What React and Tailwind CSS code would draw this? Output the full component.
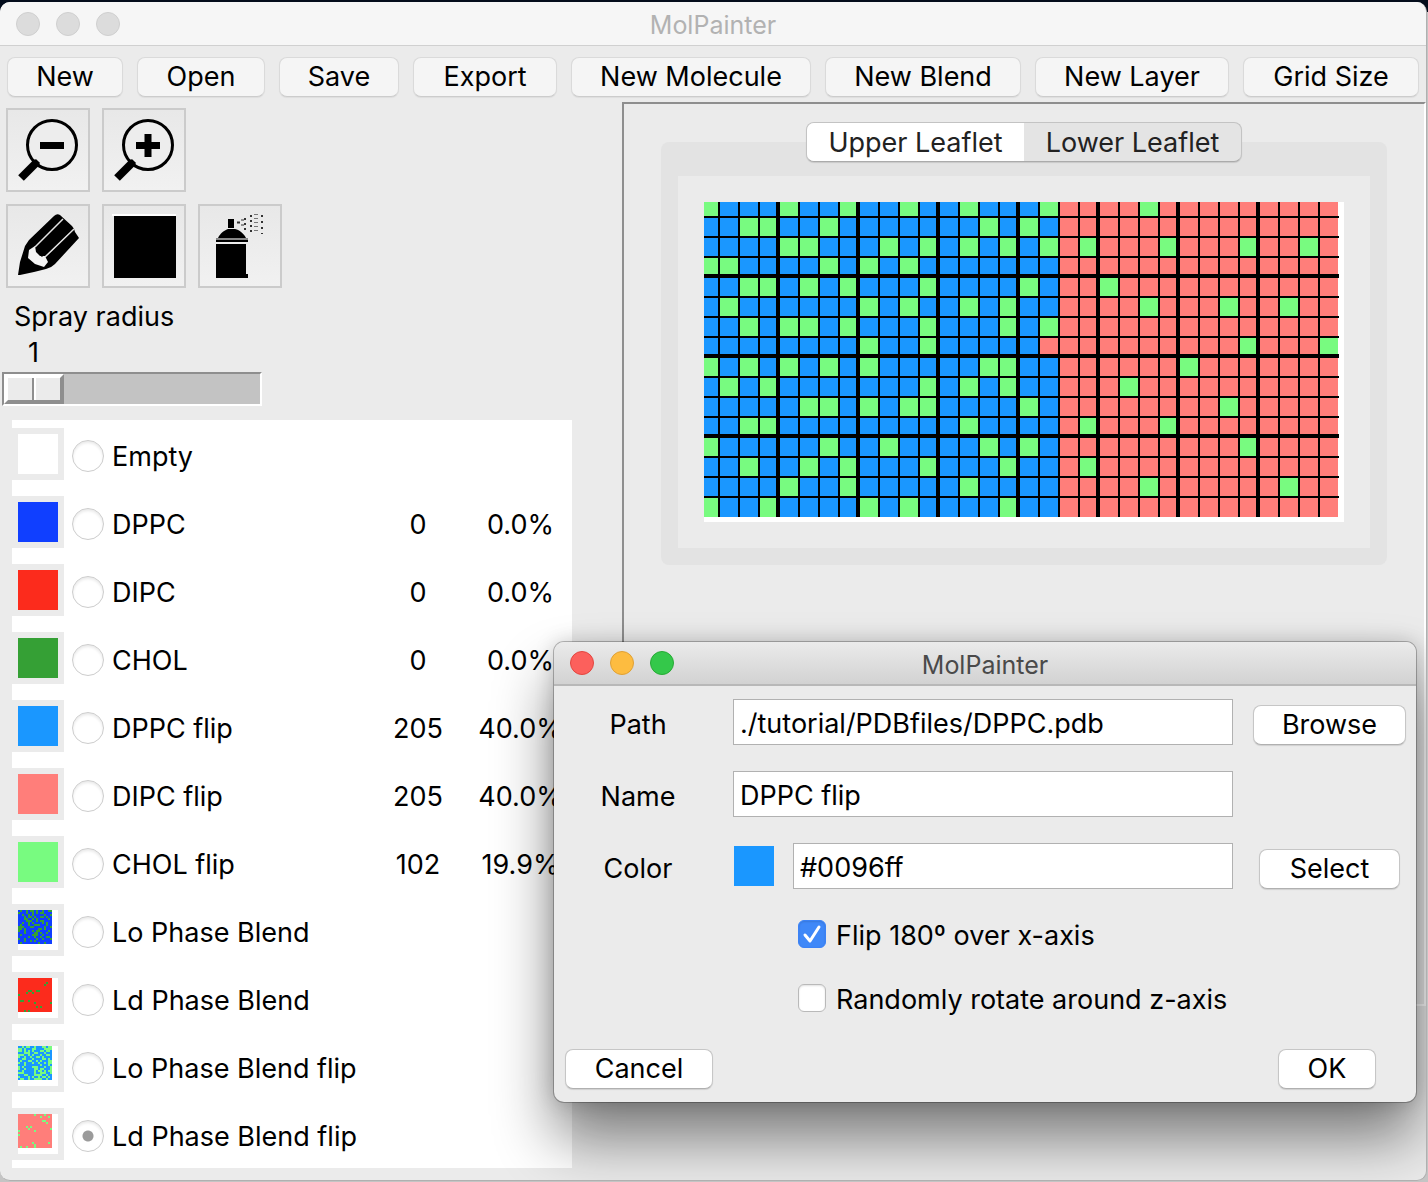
import { useState } from "react";

const BLUE = "#1a97ff";
const GREEN = "#78fb80";
const PINK = "#ff7e7a";

/* Columns that hold a CHOL flip molecule, one list for each row of the lattice. */
const CHOL_COLUMNS = [
  [0, 4, 7, 10, 13, 17, 22],
  [2, 3, 6, 14, 16],
  [4, 5, 9, 11, 13, 15, 17, 19, 23, 27, 30],
  [0, 1, 6, 8, 10],
  [2, 3, 5, 7, 11, 16, 20],
  [1, 8, 10, 13, 15, 22, 26, 29],
  [2, 4, 5, 7, 11, 15, 17],
  [8, 11, 27, 31],
  [0, 2, 4, 6, 8, 14, 15, 24],
  [1, 3, 11, 13, 15, 21],
  [5, 6, 8, 10, 11, 16, 26],
  [2, 3, 13, 19, 23],
  [0, 6, 9, 14, 16, 27],
  [2, 5, 7, 11, 15, 19],
  [4, 7, 13, 22, 29],
  [0, 3, 8, 10, 15],
];

function Lattice() {
  const cells = [];
  CHOL_COLUMNS.forEach((greens, r) => {
    for (let c = 0; c < 32; c++) {
      const base = c < 17 || (c === 17 && r !== 7) ? BLUE : PINK;
      cells.push(
        <rect key={`${r}-${c}`} x={c * 20} y={r * 20} width="20" height="20" fill={greens.includes(c) ? GREEN : base} />
      );
    }
  });
  const lines = [];
  for (let i = 1; i < 32; i++) {
    const w = i % 4 === 0 ? 4 : 2;
    lines.push(<rect key={`v${i}`} x={i * 20 - w} y="0" width={w} height="319" />);
  }
  for (let i = 1; i < 16; i++) {
    const w = i % 4 === 0 ? 4 : 2;
    lines.push(<rect key={`h${i}`} x="0" y={i * 20 - w} width="639" height={w} />);
  }
  return (
    <svg width="640" height="320" viewBox="4 4 640 320" shapeRendering="crispEdges" className="block bg-white">
      <svg x="0" y="0" width="638" height="319">{cells}</svg>
      {lines}
    </svg>
  );
}

const LO = [
  ".#..#.##.#..#..##", "#...#..#.#.##....", "..#..#.#.....#..#", "...#.##.#..##.#..",
  "...##..#.#.....#.", "....###..#.##....", "..#..#.#....#.#..", ".#...#..###...#..",
  "###...##.....#..#", "##.#......##.#...", "#..#...#.##....#.", "...#....##.#..#..",
  ".#.....###..#....", ".....#..#..#..##.", "#..#.....#..#...#", "...#..#.#........", ".#........#..#...",
];
const LD = [
  ".................", ".................", "..............#..", ".............#...",
  ".................", ".................", ".....##..##......", "....#..#.........",
  "#................", ".................", ".................", ".##..#...........",
  "........#.......#", ".................", ".........#.#.....", ".................", "...#.#...........",
];
const LO_FLIP = [
  "..#.##..#...##.##", "##.#...##....####", "##.#.#.#...##.##.", "...###..##...#...",
  "###..#.#...#..##.", "#..#..#..##.#....", "..##...#....##.#.", ".#...##..#.#...##",
  "#..#...#..#..#.##", "...#.......#...#.", "#.#....###...#..#", "#..#....##.##...#",
  "..#.....#.##.#.##", "###.....#..###..#", "...##...####..#..", "#....#.#..#.##.#.", ".##..#..####..#..",
];
const LD_FLIP = [
  "........#....#...", "...........#...#.", ".................", "............##...",
  "..............#..", ".................", "....#.#..........", ".....#..........#",
  "#.......#........", ".................", "#................", ".................",
  ".................", ".................", ".......#.......#.", "........#........", ".#..#...#........",
];

function Speckle({ rows, base, dot }) {
  return (
    <svg width="40" height="40" viewBox="0 0 40 40" shapeRendering="crispEdges" className="block bg-white">
      <rect width="34" height="34" fill={base} />
      {rows.flatMap((row, y) =>
        [...row].map((ch, x) =>
          ch === "#" ? <rect key={`${x}-${y}`} x={x * 2} y={y * 2} width="2" height="2" fill={dot} /> : null
        )
      )}
    </svg>
  );
}

const MOLECULES = [
  { name: "Empty", color: "bg-white" },
  { name: "DPPC", color: "bg-[#103fff]", count: "0", share: "0.0%" },
  { name: "DIPC", color: "bg-[#fc2b1c]", count: "0", share: "0.0%" },
  { name: "CHOL", color: "bg-[#35a035]", count: "0", share: "0.0%" },
  { name: "DPPC flip", color: "bg-[#1a97ff]", count: "205", share: "40.0%" },
  { name: "DIPC flip", color: "bg-[#ff7e7a]", count: "205", share: "40.0%" },
  { name: "CHOL flip", color: "bg-[#78fb80]", count: "102", share: "19.9%" },
  { name: "Lo Phase Blend", art: <Speckle rows={LO} base="#103fff" dot="#35a035" /> },
  { name: "Ld Phase Blend", art: <Speckle rows={LD} base="#fc2b1c" dot="#35a035" /> },
  { name: "Lo Phase Blend flip", art: <Speckle rows={LO_FLIP} base={BLUE} dot={GREEN} /> },
  { name: "Ld Phase Blend flip", art: <Speckle rows={LD_FLIP} base={PINK} dot={GREEN} /> },
];

function Magnifier({ plus }) {
  return (
    <svg viewBox="0 0 84 84" className="size-[84px]">
      <circle cx="46" cy="37" r="24.500" fill="#ededed" stroke="#000" strokeWidth="3" />
      <path d="M32 53 29 56" stroke="#000" strokeWidth="6" />
      <path d="M31 54 15 70" stroke="#000" strokeWidth="8" />
      <path d="M34 37.500H58" stroke="#000" strokeWidth="7" />
      {plus && <path d="M46 26V49" stroke="#000" strokeWidth="7" />}
    </svg>
  );
}

function Pencil() {
  return (
    <svg viewBox="0 0 84 84" className="size-[84px]">
      <path d="M12 71 14 58 19 42 23 36 48 12Q51 9 54 11L66 22Q68 24 69 28L73 34 49 60Q45 64 40 65L28 68 14 71Z" fill="#000" />
      <path d="M23 46 29 42 30 48 34 52 39 52 42 58 38 63 29 60 22 54Z" fill="#f4f4f4" />
      <path d="M29 43 57 15M39 53 68 25" stroke="#e4e4e4" strokeWidth="1.500" />
      <path d="M33 48 37 52" stroke="#000" strokeWidth="3" />
    </svg>
  );
}

function FillSquare() {
  return (
    <svg viewBox="0 0 84 84" className="size-[84px]" shapeRendering="crispEdges">
      <rect x="10" y="10" width="64" height="2" fill="#fff" />
      <rect x="12" y="12" width="62" height="62" />
    </svg>
  );
}

function SprayCan() {
  return (
    <svg viewBox="0 0 84 84" className="size-[84px]">
      <rect x="30" y="15" width="6" height="9" />
      <path d="M20 34C22 29 27 26 30 25H37C42 26 46 30 48 34Z" />
      <rect x="18" y="34" width="32" height="2" fill="#888" />
      <rect x="18" y="36" width="32" height="2" />
      <path d="M18 40H48V70H50V74H18Z" />
      <g fill="none" stroke="#333" strokeWidth="2">
        <path d="M39 18.500H42" />
        <path d="M47 14V26" strokeDasharray="2 3" />
        <path d="M53 11V28" strokeDasharray="2 3" />
        <path d="M58 10V30" strokeWidth="4" strokeDasharray="1 3" stroke="#777" />
        <path d="M64 11V30" strokeDasharray="2 4" />
        <path d="M43 16H46M43 21H46" strokeWidth="1" />
      </g>
    </svg>
  );
}

function ToolButton({ label, children }) {
  return (
    <button
      aria-label={label}
      className="flex size-[84px] items-center justify-center overflow-hidden border-2 border-[#cbcbcb] bg-linear-to-b from-[#e8e8e8] to-[#f1f1f1]"
    >
      <span className="-m-0.5 shrink-0">{children}</span>
    </button>
  );
}

function DialogButton({ className, children }) {
  return (
    <button
      className={`h-10 rounded-lg border border-[#c6c6c6] border-b-[#b0b0b0] bg-white shadow-[0_1px_1px_rgba(0,0,0,0.12)] ${className}`}
    >
      {children}
    </button>
  );
}

const FIELD = "h-[46px] border border-[#b1b1b1] bg-white px-1.5 pt-0.5 outline-none";

function CheckRow({ label, checked, onChange }) {
  return (
    <label className="flex h-8 items-center gap-2.5">
      <span className="relative mb-1 size-7">
        <input
          type="checkbox"
          checked={checked}
          onChange={onChange}
          className="block size-7 appearance-none rounded-md border border-[#b9b9b9] bg-white shadow-[inset_0_1px_2px_rgba(0,0,0,0.12)] checked:border-[#3b82f6] checked:bg-[#3f88f8]"
        />
        {checked && (
          <svg viewBox="0 0 28 28" className="pointer-events-none absolute inset-0 size-7">
            <path d="M7 15 12 21 21 7" fill="none" stroke="#fff" strokeWidth="3" strokeLinecap="round" strokeLinejoin="round" />
          </svg>
        )}
      </span>
      {label}
    </label>
  );
}

function Dialog() {
  const [path, setPath] = useState("./tutorial/PDBfiles/DPPC.pdb");
  const [name, setName] = useState("DPPC flip");
  const [color, setColor] = useState("#0096ff");
  const [flip, setFlip] = useState(true);
  const [rotate, setRotate] = useState(false);
  return (
    <section
      role="dialog"
      aria-label="MolPainter"
      className="absolute top-[640px] right-2.5 w-[862px] overflow-hidden rounded-[10px] bg-[#ebebeb] shadow-[0_0_0_1px_rgba(0,0,0,0.25),0_36px_60px_rgba(0,0,0,0.48),0_0_20px_rgba(0,0,0,0.18)]"
    >
      <header className="grid h-11 grid-cols-[1fr_auto_1fr] items-center border-b-2 border-[#b8b8b8] bg-linear-to-b from-[#ebebeb] to-[#d2d2d2] px-4">
        <div className="flex gap-4">
          <button aria-label="Close" className="size-6 rounded-full border border-[#e2463f] bg-[#fc605c]" />
          <button aria-label="Minimize" className="size-6 rounded-full border border-[#dfa035] bg-[#fdbc40]" />
          <button aria-label="Zoom" className="size-6 rounded-full border border-[#27aa35] bg-[#34c84a]" />
        </div>
        <h2 className="pt-1 text-[25px] leading-8 text-[#4a4a4a]">MolPainter</h2>
      </header>
      <div className="grid grid-cols-[168px_1fr_172px] items-center gap-y-[26px] pt-[13px]">
        <label htmlFor="path" className="pt-1.5 text-center">Path</label>
        <input id="path" value={path} onChange={(e) => setPath(e.target.value)} className={`mx-[11px] ${FIELD}`} />
        <DialogButton className="mt-1.5 mr-2.5 ml-[9px] justify-self-stretch">Browse</DialogButton>

        <label htmlFor="name" className="pt-1.5 text-center">Name</label>
        <input id="name" value={name} onChange={(e) => setName(e.target.value)} className={`mx-[11px] ${FIELD}`} />
        <span />

        <label htmlFor="color" className="pt-1.5 text-center">Color</label>
        <div className="mx-[11px] flex items-center">
          <span className="mr-[19px] ml-px size-10 shrink-0 bg-[#1a97ff]" />
          <input id="color" value={color} onChange={(e) => setColor(e.target.value)} className={`min-w-0 flex-1 ${FIELD}`} />
        </div>
        <DialogButton className="mt-1.5 mr-4 ml-[15px] justify-self-stretch">Select</DialogButton>
      </div>
      <div className="flex flex-col gap-8 pt-[31px] pl-[244px]">
        <CheckRow label="Flip 180º over x-axis" checked={flip} onChange={() => setFlip(!flip)} />
        <CheckRow label="Randomly rotate around z-axis" checked={rotate} onChange={() => setRotate(!rotate)} />
      </div>
      <footer className="flex justify-between pt-[33px] pr-10 pb-[13px] pl-[11px]">
        <DialogButton className="w-[148px]">Cancel</DialogButton>
        <DialogButton className="w-[98px]">OK</DialogButton>
      </footer>
    </section>
  );
}

function MoleculeTable() {
  const [selected, setSelected] = useState("Ld Phase Blend flip");
  return (
    <table className="ml-3 w-[560px] table-fixed border-collapse bg-white">
      <colgroup>
        <col className="w-[355px]" />
        <col className="w-[102px]" />
        <col />
      </colgroup>
      <tbody>
        {MOLECULES.map((m) => (
          <tr key={m.name} className="h-[68px]">
            <td className="p-0">
              <label className="flex items-center gap-2">
                <span className="size-[52px] bg-[#ebebeb] p-1.5">
                  {m.art || <span className={`block size-10 ${m.color}`} />}
                </span>
                <input
                  type="radio"
                  name="molecule"
                  checked={selected === m.name}
                  onChange={() => setSelected(m.name)}
                  className="mt-1 size-8 appearance-none rounded-full border border-[#cdcdcd] bg-white shadow-[inset_0_2px_3px_rgba(0,0,0,0.09)] checked:bg-[radial-gradient(circle,#9b9b9b_5px,white_6px)]"
                />
                <span className="pt-1.5 whitespace-nowrap">{m.name}</span>
              </label>
            </td>
            <td className="p-0 pt-1.5 text-center">{m.count}</td>
            <td className="p-0 pt-1.5 text-center">{m.share}</td>
          </tr>
        ))}
      </tbody>
    </table>
  );
}

export default function App() {
  const [radius, setRadius] = useState(1);
  const [leaflet, setLeaflet] = useState("Upper Leaflet");
  return (
    <div className="min-h-screen overflow-hidden bg-[#c4c4c4] font-['Inter','Liberation_Sans',sans-serif] text-[27px] leading-8 text-black">
      <div className="bg-linear-to-b from-[#040d1c] from-[12px] to-[#c4c4c4] to-[12px] pt-0.5 pb-0.5">
        <main className="relative mr-px overflow-hidden rounded-[10px] border-r border-b border-[#b0b0b0] bg-[#ebebeb]">
          <header className="grid h-11 grid-cols-[1fr_auto_1fr] items-center border-b border-[#d0d0d0] bg-[#f6f6f6] px-4">
            <div className="flex gap-4">
              <button aria-label="Close window" className="size-6 rounded-full border border-[#cfcfcf] bg-[#dcdcdc]" />
              <button aria-label="Minimize window" className="size-6 rounded-full border border-[#cfcfcf] bg-[#dcdcdc]" />
              <button aria-label="Zoom window" className="size-6 rounded-full border border-[#cfcfcf] bg-[#dcdcdc]" />
            </div>
            <h1 className="pt-0.5 text-[25px] leading-8 text-[#b2b2b2]">MolPainter</h1>
          </header>

          <nav className="grid grid-cols-[116fr_128fr_120fr_144fr_240fr_196fr_194fr_176fr] gap-3.5 pt-[11px] pr-[7px] pb-[5px] pl-[7px]">
            {["New", "Open", "Save", "Export", "New Molecule", "New Blend", "New Layer", "Grid Size"].map((t) => (
              <button
                key={t}
                className="h-10 rounded-lg border border-[#dadada] border-b-[#cccccc] bg-[#f5f5f5] whitespace-nowrap shadow-[0_1px_1px_rgba(0,0,0,0.06)]"
              >
                {t}
              </button>
            ))}
          </nav>

          <div className="flex">
            <aside className="w-[622px] shrink-0 pt-1.5 pb-3">
              <div className="flex gap-3 pl-1.5">
                <ToolButton label="Zoom out"><Magnifier /></ToolButton>
                <ToolButton label="Zoom in"><Magnifier plus /></ToolButton>
              </div>
              <div className="flex gap-3 pt-3 pl-1.5">
                <ToolButton label="Pencil"><Pencil /></ToolButton>
                <ToolButton label="Rectangle"><FillSquare /></ToolButton>
                <ToolButton label="Spray"><SprayCan /></ToolButton>
              </div>
              <label htmlFor="radius" className="mt-[13px] ml-3.5 block">Spray radius</label>
              <output htmlFor="radius" className="mt-1 ml-7 block">{radius}</output>
              <input
                id="radius"
                type="range"
                min="1"
                max="10"
                value={radius}
                onChange={(e) => setRadius(Number(e.target.value))}
                className="mt-[3px] ml-0.5 block h-[34px] w-[260px] appearance-none border-2 border-t-[#8e8e8e] border-r-white border-b-white border-l-[#8e8e8e] bg-[#c3c3c3] [&::-webkit-slider-thumb]:h-[30px] [&::-webkit-slider-thumb]:w-[60px] [&::-webkit-slider-thumb]:appearance-none [&::-webkit-slider-thumb]:border-t-4 [&::-webkit-slider-thumb]:border-r-4 [&::-webkit-slider-thumb]:border-b-4 [&::-webkit-slider-thumb]:border-l-4 [&::-webkit-slider-thumb]:border-t-white [&::-webkit-slider-thumb]:border-r-[#8e8e8e] [&::-webkit-slider-thumb]:border-b-[#8e8e8e] [&::-webkit-slider-thumb]:border-l-white [&::-webkit-slider-thumb]:bg-[linear-gradient(90deg,#ebebeb_24px,#8e8e8e_24px,#8e8e8e_26px,white_26px,white_28px,#ebebeb_28px)]"
              />
              <div className="pt-3.5">
                <MoleculeTable />
              </div>
            </aside>

            <section className="mb-[174px] flex flex-1 flex-col items-center border-2 border-t-[#8e8e8e] border-r-white border-b-white border-l-[#8e8e8e] pt-[18px]">
              <div role="tablist" className="relative z-10 flex h-10 w-[436px] overflow-hidden rounded-lg border border-[#c3c3c3] border-b-[#ababab] bg-[#e4e4e4] text-[#222] shadow-[0_1px_1px_rgba(0,0,0,0.12)]">
                {["Upper Leaflet", "Lower Leaflet"].map((t) => (
                  <button
                    key={t}
                    role="tab"
                    aria-selected={leaflet === t}
                    onClick={() => setLeaflet(t)}
                    className="flex-1 pt-0.5 whitespace-nowrap aria-selected:bg-white"
                  >
                    {t}
                  </button>
                ))}
              </div>
              <div className="-mt-5 rounded-lg bg-[#e3e3e3] px-[17px] pt-[34px] pb-[17px]">
                <div className="bg-[#ebebeb] p-[26px]">
                  <Lattice />
                </div>
              </div>
            </section>
          </div>

          <Dialog />
        </main>
      </div>
    </div>
  );
}
